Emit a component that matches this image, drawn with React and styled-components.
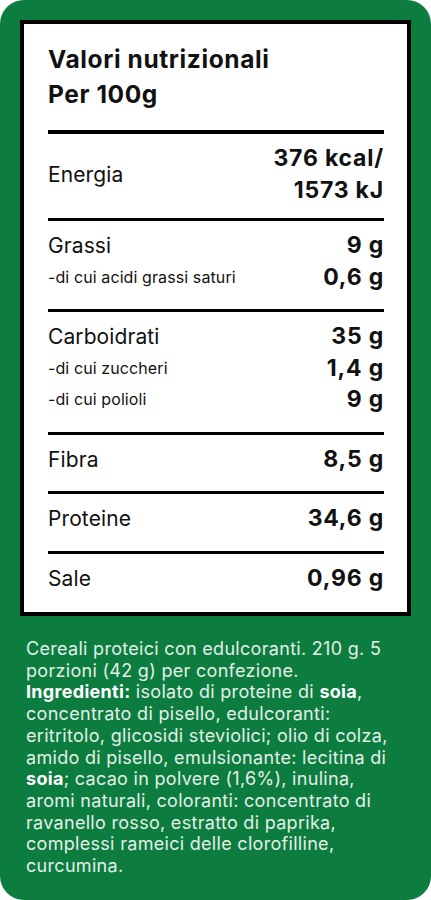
import styled, { createGlobalStyle } from "styled-components";

const GlobalStyle = createGlobalStyle`
  html, body {
    margin: 0;
    padding: 0;
    background: #ffffff;
  }
  body {
    font-family: Inter, "Noto Sans", "Liberation Sans", sans-serif;
  }
`;

const nutrients = [
  {
    compact: true,
    rows: [{ label: "Energia", value: ["376 kcal/", "1573 kJ"] }],
  },
  {
    rows: [
      { label: "Grassi", value: "9 g" },
      { label: "-di cui acidi grassi saturi", value: "0,6 g", sub: true },
    ],
  },
  {
    rows: [
      { label: "Carboidrati", value: "35 g" },
      { label: "-di cui zuccheri", value: "1,4 g", sub: true },
      { label: "-di cui polioli", value: "9 g", sub: true },
    ],
  },
  { rows: [{ label: "Fibra", value: "8,5 g" }] },
  { rows: [{ label: "Proteine", value: "34,6 g" }] },
  { rows: [{ label: "Sale", value: "0,96 g" }] },
];

const App = () => {
  return (
    <>
      <GlobalStyle />
      <Card>
        <Panel>
          <Title>
            Valori nutrizionali
            <br />
            Per 100g
          </Title>
          {nutrients.map((section, i) => (
            <Section key={i} $compact={section.compact}>
              {section.rows.map((row) => (
                <Row key={row.label}>
                  <Label $sub={row.sub}>{row.label}</Label>
                  <Value>
                    {Array.isArray(row.value)
                      ? row.value.map((v) => <span key={v}>{v}</span>)
                      : row.value}
                  </Value>
                </Row>
              ))}
            </Section>
          ))}
        </Panel>
        <Notes>
          Cereali proteici con edulcoranti. 210 g. 5
          <br />
          porzioni (42 g) per confezione.
          <br />
          <b>Ingredienti:</b> isolato di proteine di <b>soia</b>,
          <br />
          concentrato di pisello, edulcoranti:
          <br />
          eritritolo, glicosidi steviolici; olio di colza,
          <br />
          amido di pisello, emulsionante: lecitina di
          <br />
          <b>soia</b>; cacao in polvere (1,6%), inulina,
          <br />
          aromi naturali, coloranti: concentrato di
          <br />
          ravanello rosso, estratto di paprika,
          <br />
          complessi rameici delle clorofilline,
          <br />
          curcumina.
        </Notes>
      </Card>
    </>
  );
};

export default App;

const Card = styled.div`
  width: 431px;
  height: 900px;
  box-sizing: border-box;
  background-color: #0c7d3f;
  border-radius: 24px;
  padding: 20px 20px 0;
  display: flex;
  flex-direction: column;
`;

const Panel = styled.div`
  background: #ffffff;
  border: 4px solid #000000;
  padding: 18px 23px 0 24px;
  color: #111111;
`;

const Title = styled.div`
  font-size: 24.5px;
  font-weight: 700;
  line-height: 35px;
  letter-spacing: 0.6px;
  padding-bottom: 18px;
  border-bottom: 4px solid #000000;
`;

const Section = styled.div`
  padding: 9px 0 ${({ $compact }) => ($compact ? "12px" : "16px")};
  border-bottom: 3px solid #000000;
  &:last-child {
    border-bottom: none;
    padding-bottom: 18px;
  }
`;

const Row = styled.div`
  display: flex;
  justify-content: space-between;
  align-items: center;
  line-height: 31.5px;
`;

const Label = styled.span`
  font-size: ${({ $sub }) => ($sub ? "16px" : "21px")};
  font-weight: 400;
  letter-spacing: 0.1px;
`;

const Value = styled.span`
  font-size: 23px;
  font-weight: 700;
  letter-spacing: 0.8px;
  text-align: right;
  display: flex;
  flex-direction: column;
  align-items: flex-end;
`;

const Notes = styled.p`
  margin: 22px 0 0;
  padding: 0 6px;
  font-size: 18px;
  line-height: 21.7px;
  letter-spacing: 0.3px;
  color: #e4efe8;
  b {
    color: #ffffff;
    font-weight: 700;
  }
`;
